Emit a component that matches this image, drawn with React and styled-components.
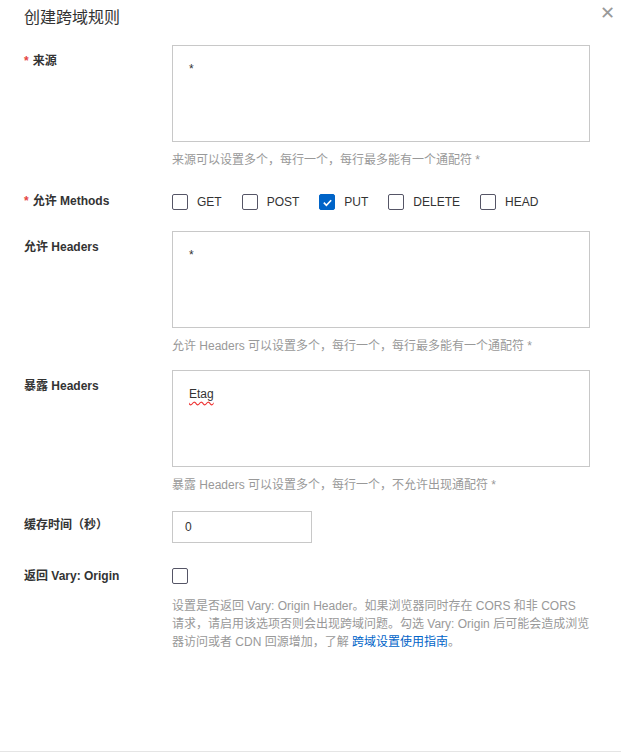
import React from "react";
import styled, { createGlobalStyle } from "styled-components";

const G = createGlobalStyle`
  body{margin:0;background:#fff;font-family:"Liberation Sans","Noto Sans CJK SC",sans-serif;color:#333;}
`;
const Dialog = styled.div`position:relative;width:621px;height:752px;box-sizing:border-box;border-bottom:1px solid #e5e5e5;padding:6px 0 0 24px;`;
const Title = styled.div`font-size:16px;color:#333;height:24px;line-height:24px;margin-bottom:15px;`;
const Close = styled.div`position:absolute;right:6px;top:2px;color:#999;font-size:18px;`;
const Row = styled.div`display:grid;grid-template-columns:148px 418px;margin-bottom:${p=>p.mb||20}px;align-items:start;`;
const Label = styled.div`font-size:12px;font-weight:600;color:#333;padding-top:${p=>p.pt ?? 7}px;line-height:16px;
  span{color:#e54545;margin-right:4px;}`;
const Area = styled.div`height:97px;border:1px solid #c8c8c8;box-sizing:border-box;padding:14px 16px;font-size:12px;line-height:18px;
  u{text-decoration:underline wavy #e33;text-underline-offset:3px;}`;
const Help = styled.div`font-size:12px;color:#999;margin-top:9px;line-height:18px;a{color:#0064c8;text-decoration:none;}`;
const Methods = styled.div`display:flex;gap:20px;align-items:center;height:18px;`;
const Check = styled.label`display:flex;align-items:center;gap:9px;font-size:12px;color:#333;`;
const Box = styled.span`width:16px;height:16px;box-sizing:border-box;border:1px solid ${p=>p.on?"#0064c8":"#556"};background:${p=>p.on?"#0064c8":"#fff"};border-radius:2px;display:flex;align-items:center;justify-content:center;`;
const Input = styled.div`width:140px;height:32px;border:1px solid #c8c8c8;box-sizing:border-box;padding:0 12px;font-size:12px;line-height:30px;`;

const Cb=({on,children})=>(<Check><Box on={on}>{on&&<svg width="11" height="11" viewBox="0 0 12 12"><path d="M2 6.2l2.8 2.8L10 3.5" fill="none" stroke="#fff" strokeWidth="1.8"/></svg>}</Box>{children}</Check>);

export default function App(){
  return(<><G/><Dialog>
    <Title>创建跨域规则</Title>
    <Close>✕</Close>
    <Row mb={24}><Label pt={8}><span>*</span>来源</Label><div><Area>*</Area><Help>来源可以设置多个，每行一个，每行最多能有一个通配符 *</Help></div></Row>
    <Row mb={20}><Label pt={0}><span>*</span>允许 Methods</Label><Methods>
      <Cb>GET</Cb><Cb>POST</Cb><Cb on>PUT</Cb><Cb>DELETE</Cb><Cb>HEAD</Cb></Methods></Row>
    <Row mb={15}><Label pt={8}>允许 Headers</Label><div><Area>*</Area><Help>允许 Headers 可以设置多个，每行一个，每行最多能有一个通配符 *</Help></div></Row>
    <Row mb={17}><Label pt={8}>暴露 Headers</Label><div><Area><u>Etag</u></Area><Help>暴露 Headers 可以设置多个，每行一个，不允许出现通配符 *</Help></div></Row>
    <Row mb={25}><Label pt={6}>缓存时间（秒）</Label><Input>0</Input></Row>
    <Row mb={0}><Label pt={0}>返回 Vary: Origin</Label><div><Box/><Help style={{marginTop:13}}>设置是否返回 Vary: Origin Header。如果浏览器同时存在 CORS 和非 CORS 请求，请启用该选项否则会出现跨域问题。勾选 Vary: Origin 后可能会造成浏览器访问或者 CDN 回源增加，了解 <a>跨域设置使用指南</a>。</Help></div></Row>
  </Dialog></>);
}
